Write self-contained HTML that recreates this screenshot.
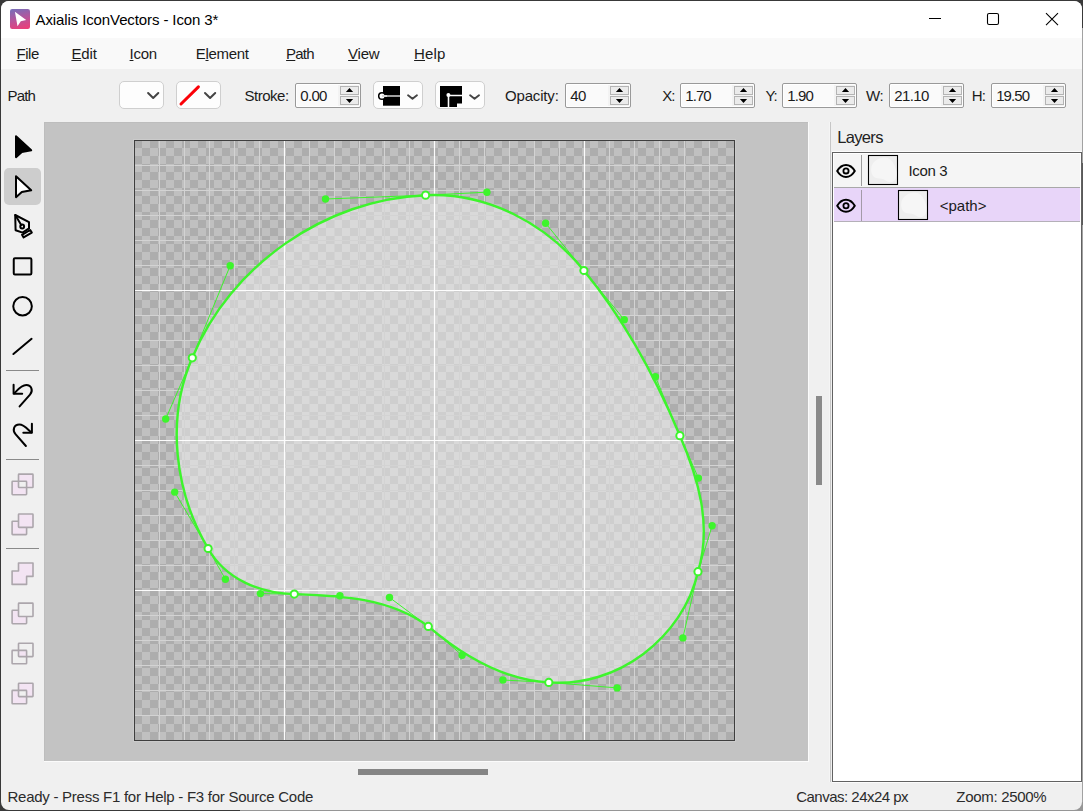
<!DOCTYPE html>
<html lang="en"><head><meta charset="utf-8"><title>Axialis IconVectors - Icon 3*</title>
<style>
html,body{margin:0;padding:0}
body{width:1083px;height:811px;overflow:hidden;background:#393939;position:relative;font-family:"Liberation Sans",sans-serif}
.abs,.t,svg{position:absolute}
.t{white-space:pre;margin:0;padding:0}
.t u{text-decoration:underline;text-decoration-thickness:1px;text-underline-offset:1px}
#win{left:1px;top:1px;width:1081px;height:809px;background:#f0f0f0;border-radius:8px;overflow:hidden}
#title{left:0;top:0;width:1081px;height:37px;background:#fff}
#menu{left:0;top:37px;width:1081px;height:31px;background:#f9f9f9}
.dd{background:#fdfdfd;border:1px solid #cfcfcf;border-radius:5px;box-sizing:border-box;height:28px;top:81px}
.inp{background:#fff;border:1px solid #999;border-radius:2px;box-sizing:border-box;height:25px;top:83px}
.sb{background:#ebebeb;border:1px solid #b4b4b4;box-sizing:border-box;width:19px;height:9px}
</style></head><body>

<div class="abs" style="left:1074px;top:28px;width:9px;height:783px;background:#a2a2a2"></div>
<div class="abs" style="left:1074px;top:163px;width:9px;height:62px;background:#5a5a5a"></div>
<div class="abs" style="left:240px;top:802px;width:843px;height:9px;background:#969696"></div>
<div id="win" class="abs"><div class="abs" id="pg" style="left:-1px;top:-1px;width:1083px;height:811px">
<div class="abs" style="left:0;top:0;width:1083px;height:38px;background:#fff"></div>
<div class="abs" style="left:0;top:38px;width:1083px;height:31px;background:#f9f9f9"></div>
<svg style="left:10px;top:9px" width="20" height="20" viewBox="0 0 20 20">
<defs><linearGradient id="lg" x1="0.38" y1="0" x2="0.62" y2="1"><stop offset="0" stop-color="#7d6cb6"/><stop offset="0.5" stop-color="#b7559b"/><stop offset="1" stop-color="#ea3f7a"/></linearGradient></defs>
<rect x="0" y="0" width="20" height="20" rx="2.2" fill="url(#lg)"/>
<path d="M4.9 2.8 L16.2 11.1 L10.8 12.2 L7.5 17.3Z" fill="#fff"/></svg>
<div class="t" style="left:35.50px;top:11.53px;font-size:15px;line-height:16.75px;letter-spacing:-0.108px;color:#000;">Axialis IconVectors - Icon 3*</div>
<svg style="left:920px;top:6px" width="150" height="26" viewBox="920 6 150 26" fill="none" stroke="#000" stroke-width="1.1">
<path d="M929 18.5H941"/>
<rect x="987.5" y="13.5" width="11" height="11" rx="1.6"/>
<path d="M1046 13.2L1058 25.2M1058 13.2L1046 25.2"/></svg>
<div class="t" style="left:16.60px;top:45.52px;font-size:15px;line-height:16.75px;letter-spacing:-0.493px;color:#1b1b1b;"><u>F</u>ile</div>
<div class="t" style="left:71.40px;top:45.52px;font-size:15px;line-height:16.75px;letter-spacing:-0.115px;color:#1b1b1b;"><u>E</u>dit</div>
<div class="t" style="left:129.60px;top:45.52px;font-size:15px;line-height:16.75px;letter-spacing:-0.315px;color:#1b1b1b;"><u>I</u>con</div>
<div class="t" style="left:195.80px;top:45.52px;font-size:15px;line-height:16.75px;letter-spacing:-0.304px;color:#1b1b1b;">E<u>l</u>ement</div>
<div class="t" style="left:286.10px;top:45.52px;font-size:15px;line-height:16.75px;letter-spacing:-0.790px;color:#1b1b1b;"><u>P</u>ath</div>
<div class="t" style="left:348.10px;top:45.52px;font-size:15px;line-height:16.75px;letter-spacing:-0.237px;color:#1b1b1b;"><u>V</u>iew</div>
<div class="t" style="left:414.10px;top:45.52px;font-size:15px;line-height:16.75px;letter-spacing:0.110px;color:#1b1b1b;"><u>H</u>elp</div>
<div class="t" style="left:7.50px;top:87.52px;font-size:15px;line-height:16.75px;letter-spacing:-0.840px;color:#1b1b1b;">Path</div>
<div class="abs dd" style="left:119px;width:45px"></div>
<div class="abs dd" style="left:176px;width:45px"></div>
<div class="abs dd" style="left:373px;width:50px"></div>
<div class="abs dd" style="left:435px;width:50px"></div>
<svg style="left:110px;top:75px" width="390" height="40" viewBox="110 75 390 40">
<path d="M148.1 93l5.1 5l5.1 -5" fill="none" stroke="#444" stroke-width="2.0" stroke-linecap="round" stroke-linejoin="round"/>
<path d="M205 93l5.1 5l5.1 -5" fill="none" stroke="#444" stroke-width="2.0" stroke-linecap="round" stroke-linejoin="round"/>
<path d="M181 104L198.4 86.9" stroke="#fb0007" stroke-width="3" stroke-linecap="round"/>
<rect x="383" y="86" width="17" height="19.7" fill="#000"/><rect x="382" y="95" width="18" height="2" fill="#a0a0a0"/><circle cx="382" cy="96" r="3.3" fill="#fff" stroke="#000" stroke-width="1.5"/><rect x="382" y="95" width="5" height="2" fill="#d8d8d8"/>
<path d="M408.05 95.3l4.45 3.5l4.45 -3.5" fill="none" stroke="#444" stroke-width="1.9" stroke-linecap="round" stroke-linejoin="round"/>
<path d="M440 86H462V103.6H457V107H440Z" fill="#000"/><path d="M448.5 107V95.5H462" fill="none" stroke="#fff" stroke-width="1.6"/><circle cx="448.4" cy="95" r="2" fill="#fff"/>
<path d="M470.1 95.3l4.45 3.5l4.45 -3.5" fill="none" stroke="#444" stroke-width="1.9" stroke-linecap="round" stroke-linejoin="round"/>
</svg>
<div class="t" style="left:244.40px;top:87.52px;font-size:15px;line-height:16.75px;letter-spacing:-0.462px;color:#1b1b1b;">Stroke:</div>
<div class="t" style="left:505.00px;top:87.52px;font-size:15px;line-height:16.75px;letter-spacing:-0.166px;color:#1b1b1b;">Opacity:</div>
<div class="abs inp" style="left:295px;width:66px"></div><div class="abs" style="left:297px;top:85px;width:41px;height:21px;background:#fafafa"></div><div class="abs" style="left:338px;top:85px;width:21px;height:21px;background:#f3f3f3"></div><div class="abs sb" style="left:340px;top:86px"></div><div class="abs sb" style="left:340px;top:96px"></div><svg style="left:340px;top:86px" width="19" height="20" viewBox="0 0 19 20"><path d="M9.5 2L13.1 5.9H5.9Z M9.5 17L13.1 13.1H5.9Z" fill="#000"/></svg><div class="t" style="left:300.20px;top:87.52px;font-size:15px;line-height:16.75px;letter-spacing:-0.651px;color:#1b1b1b;">0.00</div>
<div class="abs inp" style="left:565px;width:66px"></div><div class="abs" style="left:567px;top:85px;width:41px;height:21px;background:#fafafa"></div><div class="abs" style="left:608px;top:85px;width:21px;height:21px;background:#f3f3f3"></div><div class="abs sb" style="left:610px;top:86px"></div><div class="abs sb" style="left:610px;top:96px"></div><svg style="left:610px;top:86px" width="19" height="20" viewBox="0 0 19 20"><path d="M9.5 2L13.1 5.9H5.9Z M9.5 17L13.1 13.1H5.9Z" fill="#000"/></svg><div class="t" style="left:570.20px;top:87.52px;font-size:15px;line-height:16.75px;letter-spacing:-0.544px;color:#1b1b1b;">40</div>
<div class="t" style="left:662.20px;top:87.52px;font-size:15px;line-height:16.75px;letter-spacing:-0.994px;color:#1b1b1b;">X:</div>
<div class="abs inp" style="left:680px;width:75px"></div><div class="abs" style="left:682px;top:85px;width:50px;height:21px;background:#fafafa"></div><div class="abs" style="left:732px;top:85px;width:21px;height:21px;background:#f3f3f3"></div><div class="abs sb" style="left:734px;top:86px"></div><div class="abs sb" style="left:734px;top:96px"></div><svg style="left:734px;top:86px" width="19" height="20" viewBox="0 0 19 20"><path d="M9.5 2L13.1 5.9H5.9Z M9.5 17L13.1 13.1H5.9Z" fill="#000"/></svg><div class="t" style="left:685.20px;top:87.52px;font-size:15px;line-height:16.75px;letter-spacing:-0.901px;color:#1b1b1b;">1.70</div>
<div class="t" style="left:765.40px;top:87.52px;font-size:15px;line-height:16.75px;letter-spacing:-1.180px;color:#1b1b1b;">Y:</div>
<div class="abs inp" style="left:782px;width:75px"></div><div class="abs" style="left:784px;top:85px;width:50px;height:21px;background:#fafafa"></div><div class="abs" style="left:834px;top:85px;width:21px;height:21px;background:#f3f3f3"></div><div class="abs sb" style="left:836px;top:86px"></div><div class="abs sb" style="left:836px;top:96px"></div><svg style="left:836px;top:86px" width="19" height="20" viewBox="0 0 19 20"><path d="M9.5 2L13.1 5.9H5.9Z M9.5 17L13.1 13.1H5.9Z" fill="#000"/></svg><div class="t" style="left:787.20px;top:87.52px;font-size:15px;line-height:16.75px;letter-spacing:-0.851px;color:#1b1b1b;">1.90</div>
<div class="t" style="left:866.10px;top:87.52px;font-size:15px;line-height:16.75px;letter-spacing:-0.381px;color:#1b1b1b;">W:</div>
<div class="abs inp" style="left:889px;width:75px"></div><div class="abs" style="left:891px;top:85px;width:50px;height:21px;background:#fafafa"></div><div class="abs" style="left:941px;top:85px;width:21px;height:21px;background:#f3f3f3"></div><div class="abs sb" style="left:943px;top:86px"></div><div class="abs sb" style="left:943px;top:96px"></div><svg style="left:943px;top:86px" width="19" height="20" viewBox="0 0 19 20"><path d="M9.5 2L13.1 5.9H5.9Z M9.5 17L13.1 13.1H5.9Z" fill="#000"/></svg><div class="t" style="left:894.20px;top:87.52px;font-size:15px;line-height:16.75px;letter-spacing:-0.609px;color:#1b1b1b;">21.10</div>
<div class="t" style="left:971.70px;top:87.52px;font-size:15px;line-height:16.75px;letter-spacing:-0.850px;color:#1b1b1b;">H:</div>
<div class="abs inp" style="left:991px;width:75px"></div><div class="abs" style="left:993px;top:85px;width:50px;height:21px;background:#fafafa"></div><div class="abs" style="left:1043px;top:85px;width:21px;height:21px;background:#f3f3f3"></div><div class="abs sb" style="left:1045px;top:86px"></div><div class="abs sb" style="left:1045px;top:96px"></div><svg style="left:1045px;top:86px" width="19" height="20" viewBox="0 0 19 20"><path d="M9.5 2L13.1 5.9H5.9Z M9.5 17L13.1 13.1H5.9Z" fill="#000"/></svg><div class="t" style="left:996.20px;top:87.52px;font-size:15px;line-height:16.75px;letter-spacing:-0.909px;color:#1b1b1b;">19.50</div>
<div class="abs" style="left:4px;top:168px;width:37px;height:37px;border-radius:5px;background:#cdcdcd"></div>
<svg style="left:0;top:122px" width="44" height="600" viewBox="0 122 44 600">
<path d="M16 136.2L31.2 150.2L21.8 152L16 157.2Z" fill="#000" stroke="#000" stroke-width="2" stroke-linejoin="round" stroke-linecap="round"/>
<path d="M16 176.2L31.2 190.2L21.8 192L16 197.2Z" fill="#fff" stroke="#000" stroke-width="2" stroke-linejoin="round" stroke-linecap="round"/>
<path d="M15.2 215L29 222.2V228.4L22.6 232.6L15.6 230.2Z" fill="none" stroke="#000" stroke-width="2" stroke-linejoin="round" stroke-linecap="round"/><path d="M15.4 215.2L21.2 225" fill="none" stroke="#000" stroke-width="2" stroke-linejoin="round" stroke-linecap="round" stroke-width="1.7"/><circle cx="22.2" cy="226.5" r="1.9" fill="none" stroke="#000" stroke-width="2"/><path d="M30.2 230L31.8 232.6L23.6 237.4L22 234.8Z" fill="none" stroke="#000" stroke-width="2" stroke-linejoin="round" stroke-linecap="round" stroke-width="1.6"/>
<rect x="13.75" y="258.3" width="17.65" height="16.1" rx="1.2" fill="none" stroke="#000" stroke-width="2" stroke-linejoin="round" stroke-linecap="round"/>
<circle cx="22.55" cy="306.25" r="9.3" fill="none" stroke="#000" stroke-width="2" stroke-linejoin="round" stroke-linecap="round"/>
<path d="M13.4 354L31.6 338.8" fill="none" stroke="#000" stroke-width="2" stroke-linejoin="round" stroke-linecap="round"/>
<rect x="6" y="370" width="33" height="1" fill="#8a8a8a"/>
<rect x="6" y="459" width="33" height="1" fill="#8a8a8a"/>
<rect x="6" y="548" width="33" height="1" fill="#8a8a8a"/>
<path d="M19.6 406.4L30 394.6C33.4 390.6 31.6 385 26.2 385C21.4 385 17.6 390 14.2 393.4" fill="none" stroke="#000" stroke-width="2" stroke-linejoin="round" stroke-linecap="round"/><path d="M13.6 384.8V393.8H22.2" fill="none" stroke="#000" stroke-width="2" stroke-linejoin="round" stroke-linecap="round"/>
<path d="M25.9 446L15.5 434.2C12.1 430.2 13.9 424.6 19.3 424.6C24.1 424.6 27.9 429.6 31.3 432.4" fill="none" stroke="#000" stroke-width="2" stroke-linejoin="round" stroke-linecap="round"/><path d="M31.9 423.8V432.8H23.3" fill="none" stroke="#000" stroke-width="2" stroke-linejoin="round" stroke-linecap="round"/>
<path fill-rule="evenodd" fill="#f3e4f3" d="M18.5 474.1h14.5v13.4h-14.5z M12.1 481.3h14.5v13.4h-14.5z"/><rect x="18.5" y="474.1" width="14.5" height="13.4" rx="0.6" fill="none" stroke="#aca6ac" stroke-width="1.6" stroke-linejoin="round"/><rect x="12.1" y="481.3" width="14.5" height="13.4" rx="0.6" fill="none" stroke="#aca6ac" stroke-width="1.6" stroke-linejoin="round"/>
<rect x="12.1" y="521.2" width="14.5" height="13.4" rx="0.6" fill="#f3e4f3" stroke="#aca6ac" stroke-width="1.6" stroke-linejoin="round"/><rect x="18.5" y="514.0" width="14.5" height="13.4" rx="0.6" fill="#f3e4f3" stroke="#aca6ac" stroke-width="1.6" stroke-linejoin="round"/>
<path fill="#f3e4f3" stroke="#aca6ac" stroke-width="1.6" stroke-linejoin="round" d="M18.5 563.0h14.5v13.4h-6.4v8h-14.5v-13.4h6.4z"/>
<rect x="12.1" y="610.3" width="14.5" height="13.4" rx="0.6" fill="#f3e4f3" stroke="#aca6ac" stroke-width="1.6" stroke-linejoin="round"/><rect x="18.5" y="603.0999999999999" width="14.5" height="13.4" rx="0.6" fill="#f0f0f0" stroke="#aca6ac" stroke-width="1.6" stroke-linejoin="round"/>
<rect x="18.5" y="650.4" width="8.1" height="6.2" fill="#f3e4f3"/><rect x="18.5" y="643.1999999999999" width="14.5" height="13.4" rx="0.6" fill="none" stroke="#aca6ac" stroke-width="1.6" stroke-linejoin="round"/><rect x="12.1" y="650.4" width="14.5" height="13.4" rx="0.6" fill="none" stroke="#aca6ac" stroke-width="1.6" stroke-linejoin="round"/>
<path fill-rule="evenodd" fill="#f3e4f3" d="M18.5 683.1999999999999h14.5v13.4h-14.5z M12.1 690.4h14.5v13.4h-14.5z"/><rect x="18.5" y="683.1999999999999" width="14.5" height="13.4" rx="0.6" fill="none" stroke="#aca6ac" stroke-width="1.6" stroke-linejoin="round"/><rect x="12.1" y="690.4" width="14.5" height="13.4" rx="0.6" fill="none" stroke="#aca6ac" stroke-width="1.6" stroke-linejoin="round"/>
</svg>
<div class="abs" style="left:44px;top:122px;width:764px;height:639px;background:#c3c3c3;box-shadow:inset 1px 1px 0 #bdbdbd"></div>
<div class="abs" style="left:44px;top:761px;width:765px;height:1px;background:#fbfbfb"></div>
<div class="abs" style="left:808px;top:122px;width:1px;height:640px;background:#fbfbfb"></div>
<div class="abs" style="left:816px;top:396px;width:6px;height:89px;background:#8a8a8a"></div>
<div class="abs" style="left:358px;top:769px;width:130px;height:6px;background:#858585"></div>
<svg style="left:124px;top:130px" width="622" height="622" viewBox="124 130 622 622">
<defs><pattern id="ck" x="134" y="140" width="16" height="16" patternUnits="userSpaceOnUse"><rect width="16" height="16" fill="#c0c0c0"/><rect width="8" height="8" fill="#adadad"/><rect x="8" y="8" width="8" height="8" fill="#adadad"/></pattern></defs>
<rect x="133.5" y="139.5" width="602" height="602" fill="none" stroke="#cbcbcb" stroke-width="1"/>
<rect x="134" y="140" width="601" height="601" fill="url(#ck)"/>
<path d="M425.6 195.2C486.9 192.2 545.6 223.2 583.9 270.5C624.3 319.8 655.4 376.8 679.9 435.7C698.4 478.1 712.1 525.8 698 571.7C682.9 637.9 617.1 687.9 548.8 682.4C502.9 680 462.1 655.2 428.3 626.4C389.5 597.5 339.9 595.8 294.3 594.1C260.4 593.6 225.4 579.2 208.1 548.5C174.7 492.1 165.7 419 192.3 357.8C230.2 265.7 325.5 199 425.6 195.2Z" fill="#fff" fill-opacity="0.4"/>
<path d="M159.5 141V740M135 165.5H734M184.5 141V740M135 190.5H734M209.5 141V740M135 215.5H734M234.5 141V740M135 240.5H734M259.5 141V740M135 265.5H734M309.5 141V740M135 315.5H734M334.5 141V740M135 340.5H734M359.5 141V740M135 365.5H734M384.5 141V740M135 390.5H734M409.5 141V740M135 415.5H734M459.5 141V740M135 465.5H734M484.5 141V740M135 490.5H734M509.5 141V740M135 515.5H734M534.5 141V740M135 540.5H734M559.5 141V740M135 565.5H734M609.5 141V740M135 615.5H734M634.5 141V740M135 640.5H734M659.5 141V740M135 665.5H734M684.5 141V740M135 690.5H734M709.5 141V740M135 715.5H734" stroke="#d3d3d3" stroke-width="1" fill="none"/>
<path d="M284.5 141V740M135 290.5H734M434.5 141V740M135 440.5H734M584.5 141V740M135 590.5H734" stroke="#fff" stroke-opacity="0.95" stroke-width="1.2" fill="none"/>
<path d="M425.6 195.2C486.9 192.2 545.6 223.2 583.9 270.5C624.3 319.8 655.4 376.8 679.9 435.7C698.4 478.1 712.1 525.8 698 571.7C682.9 637.9 617.1 687.9 548.8 682.4C502.9 680 462.1 655.2 428.3 626.4C389.5 597.5 339.9 595.8 294.3 594.1C260.4 593.6 225.4 579.2 208.1 548.5C174.7 492.1 165.7 419 192.3 357.8C230.2 265.7 325.5 199 425.6 195.2Z" fill="none" stroke="#3df52c" stroke-width="2.4" stroke-linejoin="round"/>
<path d="M325.5 199L425.6 195.2L486.9 192.2M545.6 223.2L583.9 270.5L624.3 319.8M655.4 376.8L679.9 435.7L698.4 478.1M712.1 525.8L698 571.7L682.9 637.9M617.1 687.9L548.8 682.4L502.9 680M462.1 655.2L428.3 626.4L389.5 597.5M339.9 595.8L294.3 594.1L260.4 593.6M225.4 579.2L208.1 548.5L174.7 492.1M165.7 419L192.3 357.8L230.2 265.7" stroke="#3df52c" stroke-width="1" fill="none"/>
<circle cx="325.5" cy="199" r="3.7" fill="#3df52c"/>
<circle cx="486.9" cy="192.2" r="3.7" fill="#3df52c"/>
<circle cx="545.6" cy="223.2" r="3.7" fill="#3df52c"/>
<circle cx="624.3" cy="319.8" r="3.7" fill="#3df52c"/>
<circle cx="655.4" cy="376.8" r="3.7" fill="#3df52c"/>
<circle cx="698.4" cy="478.1" r="3.7" fill="#3df52c"/>
<circle cx="712.1" cy="525.8" r="3.7" fill="#3df52c"/>
<circle cx="682.9" cy="637.9" r="3.7" fill="#3df52c"/>
<circle cx="617.1" cy="687.9" r="3.7" fill="#3df52c"/>
<circle cx="502.9" cy="680" r="3.7" fill="#3df52c"/>
<circle cx="462.1" cy="655.2" r="3.7" fill="#3df52c"/>
<circle cx="389.5" cy="597.5" r="3.7" fill="#3df52c"/>
<circle cx="339.9" cy="595.8" r="3.7" fill="#3df52c"/>
<circle cx="260.4" cy="593.6" r="3.7" fill="#3df52c"/>
<circle cx="225.4" cy="579.2" r="3.7" fill="#3df52c"/>
<circle cx="174.7" cy="492.1" r="3.7" fill="#3df52c"/>
<circle cx="165.7" cy="419" r="3.7" fill="#3df52c"/>
<circle cx="230.2" cy="265.7" r="3.7" fill="#3df52c"/>
<circle cx="425.6" cy="195.2" r="3.6" fill="#fff" stroke="#3df52c" stroke-width="2"/>
<circle cx="583.9" cy="270.5" r="3.6" fill="#fff" stroke="#3df52c" stroke-width="2"/>
<circle cx="679.9" cy="435.7" r="3.6" fill="#fff" stroke="#3df52c" stroke-width="2"/>
<circle cx="698" cy="571.7" r="3.6" fill="#fff" stroke="#3df52c" stroke-width="2"/>
<circle cx="548.8" cy="682.4" r="3.6" fill="#fff" stroke="#3df52c" stroke-width="2"/>
<circle cx="428.3" cy="626.4" r="3.6" fill="#fff" stroke="#3df52c" stroke-width="2"/>
<circle cx="294.3" cy="594.1" r="3.6" fill="#fff" stroke="#3df52c" stroke-width="2"/>
<circle cx="208.1" cy="548.5" r="3.6" fill="#fff" stroke="#3df52c" stroke-width="2"/>
<circle cx="192.3" cy="357.8" r="3.6" fill="#fff" stroke="#3df52c" stroke-width="2"/>
<rect x="134.5" y="140.5" width="600" height="600" fill="none" stroke="#3e3e3e" stroke-width="1"/>
</svg>
<div class="abs" style="left:829px;top:122px;width:1px;height:660px;background:#f5f5f5"></div><div class="abs" style="left:830px;top:122px;width:1px;height:660px;background:#c6c6c6"></div>
<div class="t" style="left:837.20px;top:128.17px;font-size:16.5px;line-height:18.43px;letter-spacing:-0.655px;color:#222;">Layers</div>
<div class="abs" style="left:832px;top:151px;width:250px;height:1px;background:#fcfcfc"></div>
<div class="abs" style="left:832px;top:152px;width:250px;height:630px;box-sizing:border-box;border:1px solid #626262;background:#fff"></div>
<div class="abs" style="left:832px;top:782px;width:250px;height:1px;background:#fcfcfc"></div>
<div class="abs" style="left:834px;top:154px;width:246px;height:33px;background:#f5f5f5"></div>
<div class="abs" style="left:834px;top:187px;width:246px;height:1px;background:#a8a8a8"></div>
<div class="abs" style="left:834px;top:188px;width:246px;height:33px;background:#e8d5f9"></div>
<div class="abs" style="left:834px;top:221px;width:246px;height:1px;background:#b4b0b8"></div>
<div class="abs" style="left:861px;top:155px;width:1px;height:31px;background:#9c9c9c"></div>
<div class="abs" style="left:861px;top:190px;width:1px;height:31px;background:#a39aa8"></div>
<svg style="left:833px;top:153px" width="100" height="70" viewBox="833 153 100 70">
<g transform="translate(846 170.9)"><path d="M-8.8 0C-6.4 -4 -3.2 -6 0 -6C3.2 -6 6.4 -4 8.8 0C6.4 4 3.2 6 0 6C-3.2 6 -6.4 4 -8.8 0Z" fill="none" stroke="#000" stroke-width="2" stroke-linejoin="round"/><circle r="2.6" fill="none" stroke="#000" stroke-width="1.8"/></g><g transform="translate(846 205.8)"><path d="M-8.8 0C-6.4 -4 -3.2 -6 0 -6C3.2 -6 6.4 -4 8.8 0C6.4 4 3.2 6 0 6C-3.2 6 -6.4 4 -8.8 0Z" fill="none" stroke="#000" stroke-width="2" stroke-linejoin="round"/><circle r="2.6" fill="none" stroke="#000" stroke-width="1.8"/></g>
<g transform="translate(868 155)"><rect x="0.5" y="0.5" width="29" height="29" fill="#eeeeee" stroke="#000" stroke-width="1.1"/><path d="M16 2.4C21 2.2 24.6 5.8 26.6 10.4C28.6 14.6 29.4 19.4 27.8 23.4C26 27.6 21.6 28.4 17.6 25.4C15.2 23.4 11.4 23.8 8 23C3.6 21.6 2.2 15.6 3.6 11C5.4 5.8 10.6 2.6 16 2.4Z" fill="#fff" fill-opacity="0.45"/></g>
<g transform="translate(898 190)"><rect x="0.5" y="0.5" width="29" height="29" fill="#eeeeee" stroke="#000" stroke-width="1.1"/><path d="M16 2.4C21 2.2 24.6 5.8 26.6 10.4C28.6 14.6 29.4 19.4 27.8 23.4C26 27.6 21.6 28.4 17.6 25.4C15.2 23.4 11.4 23.8 8 23C3.6 21.6 2.2 15.6 3.6 11C5.4 5.8 10.6 2.6 16 2.4Z" fill="#fff" fill-opacity="0.45"/></g>
</svg>
<div class="t" style="left:908.50px;top:162.53px;font-size:15px;line-height:16.75px;letter-spacing:-0.346px;color:#1b1b1b;">Icon 3</div>
<div class="t" style="left:939.70px;top:197.53px;font-size:15px;line-height:16.75px;letter-spacing:0.014px;color:#1b1b1b;">&lt;path&gt;</div>
<div class="t" style="left:7.50px;top:788.52px;font-size:15px;line-height:16.75px;letter-spacing:-0.261px;color:#2b2b2b;">Ready - Press F1 for Help - F3 for Source Code</div>
<div class="t" style="left:796.20px;top:788.52px;font-size:15px;line-height:16.75px;letter-spacing:-0.511px;color:#2b2b2b;">Canvas: 24x24 px</div>
<div class="t" style="left:956.30px;top:788.52px;font-size:15px;line-height:16.75px;letter-spacing:-0.299px;color:#2b2b2b;">Zoom: 2500%</div>
</div></div>
</body></html>
